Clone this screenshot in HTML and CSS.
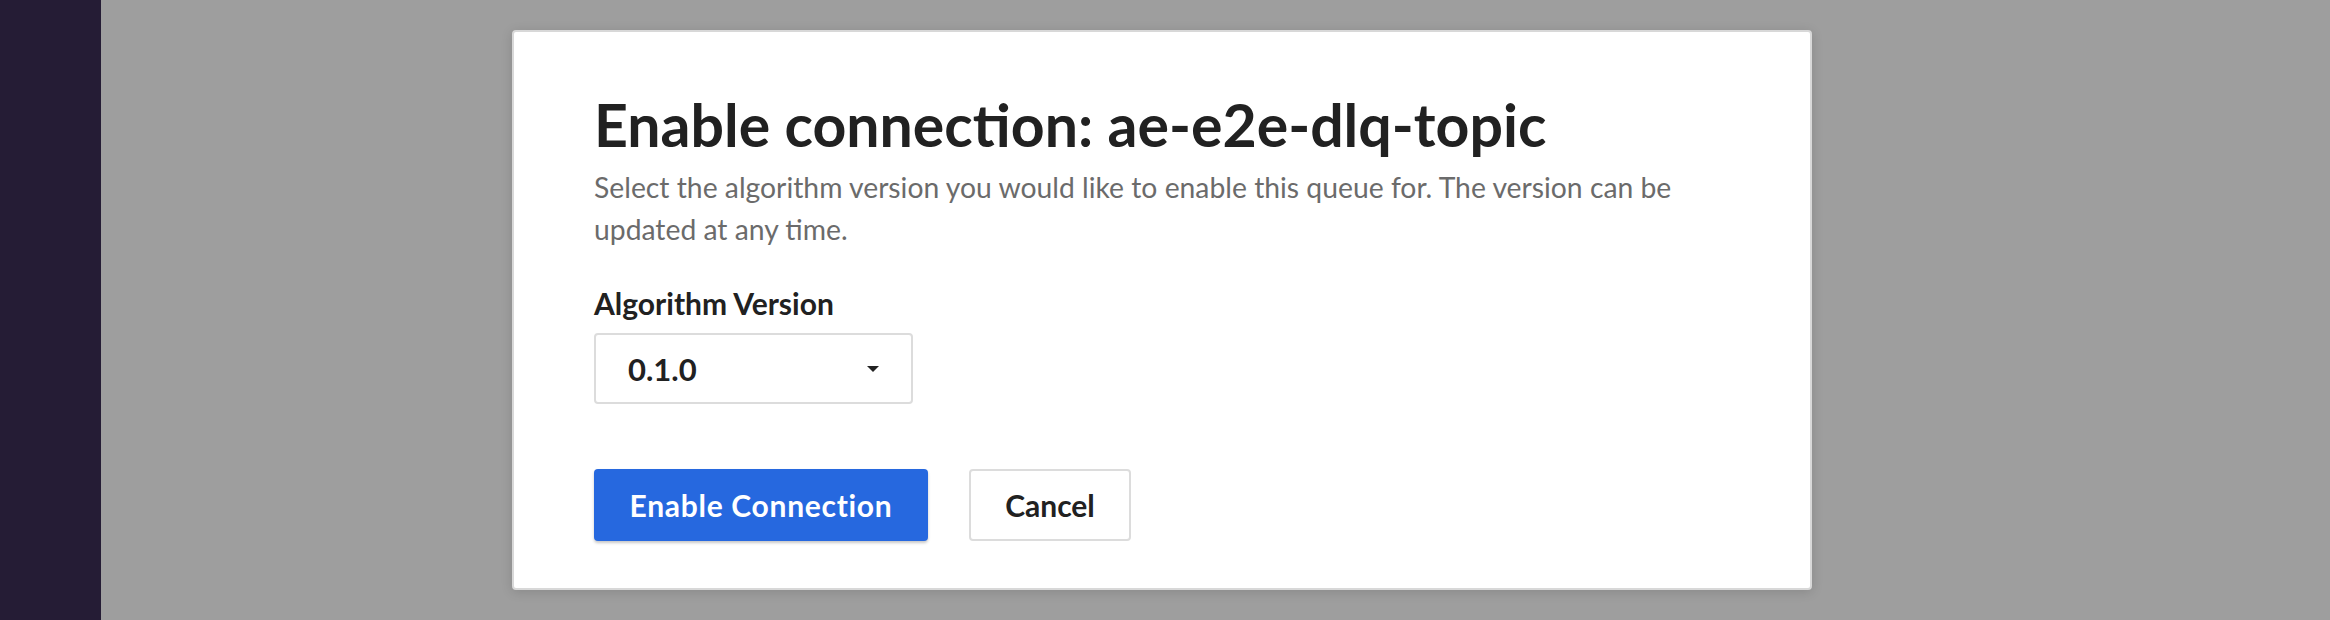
FILE: index.html
```html
<!DOCTYPE html>
<html>
<head>
<meta charset="utf-8">
<link rel="stylesheet" href="styles.css">
</head>
<body>
<div class="app">
  <aside class="sidebar"></aside>
  <main class="backdrop">
    <section class="modal">
      <h1 class="modal-title">Enable connection: ae-e2e-dlq-topic</h1>
      <p class="modal-desc">Select the algorithm version you would like to enable this queue for. The version can be updated at any time.</p>
      <label class="field-label">Algorithm Version</label>
      <div class="select">
        <span class="select-value">0.1.0</span>
        <svg class="caret" width="12" height="6" viewBox="0 0 12 6"><path d="M0 0h12L6 6z" fill="#222"/></svg>
      </div>
      <div class="actions">
        <button class="btn btn-primary">Enable Connection</button>
        <button class="btn btn-secondary">Cancel</button>
      </div>
    </section>
  </main>
</div>
</body>
</html>
```
FILE: styles.css
```css
* { box-sizing: border-box; }
html, body { margin: 0; padding: 0; }
body { font-family: "Lato", "Open Sans", sans-serif; }
.app { display: flex; width: 2330px; height: 620px; overflow: hidden; }
.sidebar { width: 101px; flex: none; background: #251c35; }
.backdrop { flex: 1; background: #9e9e9e; padding-top: 30px; padding-left: 411px; }
.modal {
  width: 1300px; height: 560px; background: #fff;
  border: 2px solid #d8d8d8; border-radius: 4px;
  box-shadow: 0 2px 12px rgba(0,0,0,0.14);
  padding: 58px 80px 48px;
}
.modal-title { margin: 0; font-size: 59px; line-height: 70px; font-weight: 700; color: #212121; }
.modal-desc { margin: 6px 0 0; font-size: 28.3px; line-height: 42px; color: #6b6b6b; }
.field-label { display: block; margin-top: 35px; font-size: 30px; line-height: 36px; font-weight: 700; color: #212121; }
.select {
  margin-top: 12px; width: 319px; height: 71px;
  border: 2px solid #dcdcdc; border-radius: 4px;
  display: flex; align-items: center; justify-content: space-between;
  padding: 0 32px;
}
.select-value { font-size: 31px; font-weight: 700; color: #212121; }
.caret { flex: none; }
.actions { display: flex; gap: 41px; margin-top: 65px; }
.btn {
  height: 72px; border-radius: 4px; font-family: inherit; font-size: 30px; font-weight: 700;
  padding: 0; white-space: nowrap; text-align: center;
}
.btn-primary { width: 334px; background: #2668df; color: #fff; border: none; letter-spacing: 0.7px; box-shadow: 0 2px 3px rgba(0,0,0,0.22); }
.btn-secondary { width: 162px; background: #fff; color: #212121; border: 2px solid #dcdcdc; }
```
